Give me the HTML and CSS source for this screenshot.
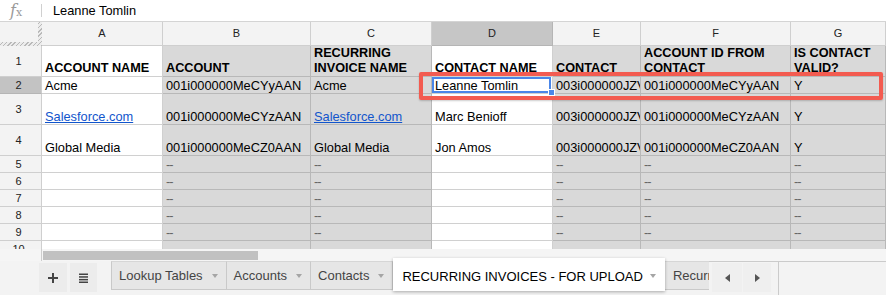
FILE: index.html
```html
<!DOCTYPE html>
<html>
<head>
<meta charset="utf-8">
<title>Sheet</title>
<link rel="stylesheet" href="styles.css">
</head>
<body>
<div class="formula-bar">
  <span class="fx"><i>f</i><span class="fx-x">x</span></span>
  <span class="fx-sep"></span>
  <span class="fx-value">Leanne Tomlin</span>
</div>
<div class="sheet">
  <div class="grid">
    <div class="corner"></div>
    <div class="ch">A</div><div class="ch">B</div><div class="ch">C</div><div class="ch on">D</div><div class="ch">E</div><div class="ch">F</div><div class="ch">G</div>

    <div class="rh">1</div>
    <div class="w hd">ACCOUNT NAME</div>
    <div class="g hd">ACCOUNT</div>
    <div class="g hd">RECURRING INVOICE NAME</div>
    <div class="w hd">CONTACT NAME</div>
    <div class="g hd">CONTACT</div>
    <div class="g hd">ACCOUNT ID FROM CONTACT</div>
    <div class="g hd">IS CONTACT VALID?</div>

    <div class="rh on">2</div>
    <div class="w">Acme</div>
    <div class="g">001i000000MeCYyAAN</div>
    <div class="g">Acme</div>
    <div class="w sel">Leanne Tomlin<span class="handle"></span></div>
    <div class="g">003i000000JZV</div>
    <div class="g">001i000000MeCYyAAN</div>
    <div class="g">Y</div>

    <div class="rh">3</div>
    <div class="w"><span class="link">Salesforce.com</span></div>
    <div class="g">001i000000MeCYzAAN</div>
    <div class="g"><span class="link">Salesforce.com</span></div>
    <div class="w">Marc Benioff</div>
    <div class="g">003i000000JZV</div>
    <div class="g">001i000000MeCYzAAN</div>
    <div class="g">Y</div>

    <div class="rh">4</div>
    <div class="w">Global Media</div>
    <div class="g">001i000000MeCZ0AAN</div>
    <div class="g">Global Media</div>
    <div class="w">Jon Amos</div>
    <div class="g">003i000000JZV</div>
    <div class="g">001i000000MeCZ0AAN</div>
    <div class="g">Y</div>

    <div class="rh">5</div>
    <div class="w"></div><div class="g dash">--</div><div class="g dash">--</div><div class="w"></div><div class="g dash">--</div><div class="g dash">--</div><div class="g dash">--</div>
    <div class="rh">6</div>
    <div class="w"></div><div class="g dash">--</div><div class="g dash">--</div><div class="w"></div><div class="g dash">--</div><div class="g dash">--</div><div class="g dash">--</div>
    <div class="rh">7</div>
    <div class="w"></div><div class="g dash">--</div><div class="g dash">--</div><div class="w"></div><div class="g dash">--</div><div class="g dash">--</div><div class="g dash">--</div>
    <div class="rh">8</div>
    <div class="w"></div><div class="g dash">--</div><div class="g dash">--</div><div class="w"></div><div class="g dash">--</div><div class="g dash">--</div><div class="g dash">--</div>
    <div class="rh">9</div>
    <div class="w"></div><div class="g dash">--</div><div class="g dash">--</div><div class="w"></div><div class="g dash">--</div><div class="g dash">--</div><div class="g dash">--</div>
    <div class="rh">10</div>
    <div class="w"></div><div class="g"></div><div class="g"></div><div class="w"></div><div class="g"></div><div class="g"></div><div class="g"></div>
  </div>
  <div class="highlight"></div>
</div>
<div class="hscroll">
  <div class="hscroll-gutter"></div>
  <div class="hscroll-track"><div class="thumb"></div></div>
</div>
<div class="tabbar">
  <div class="tb-btn plus">
    <svg width="10" height="10" viewBox="0 0 10 10"><rect x="4" y="0" width="2" height="10" fill="#444"/><rect x="0" y="4" width="10" height="2" fill="#444"/></svg>
  </div>
  <div class="tb-btn menu">
    <svg width="9" height="10" viewBox="0 0 9 10"><rect x="0" y="0.5" width="9" height="1.5" fill="#444"/><rect x="0" y="3.2" width="9" height="1.5" fill="#444"/><rect x="0" y="5.9" width="9" height="1.5" fill="#444"/><rect x="0" y="8.5" width="9" height="1.5" fill="#444"/></svg>
  </div>
  <div class="tabs">
    <div class="tab first">Lookup Tables<span class="caret"></span></div>
    <div class="tab">Accounts<span class="caret"></span></div>
    <div class="tab">Contacts<span class="caret"></span></div>
    <div class="tab active">RECURRING INVOICES - FOR UPLOAD<span class="caret"></span></div>
    <div class="tab cut">Recurr</div>
  </div>
  <div class="tab-nav">
    <div class="nav-btn"><span class="tri-left"></span></div>
    <div class="nav-btn"><span class="tri-right"></span></div>
  </div>
  <div class="tb-fill"></div>
</div>
</body>
</html>
```

FILE: styles.css
```css
* { box-sizing: border-box; margin: 0; padding: 0; }
body {
  margin: 0;
  width: 886px;
  height: 295px;
  overflow: hidden;
  background: #fff;
  font-family: "Liberation Sans", Arial, sans-serif;
  color: #000;
}

/* formula bar */
.formula-bar {
  height: 22px;
  border-bottom: 1px solid #d4d4d4;
  display: flex;
  align-items: center;
  padding-bottom: 1px;
}
.fx {
  width: 41px;
  padding-left: 10px;
  color: #9a9a9a;
  font-family: "DejaVu Serif", "Liberation Serif", serif;
  display: flex;
  align-items: baseline;
}
.fx i { font-size: 16px; font-style: italic; }
.fx-x { font-size: 11px; }
.fx-sep { width: 1px; height: 13px; background: #d0d0d0; }
.fx-value { margin-left: 11px; font-size: 12.8px; }

/* sheet */
.sheet {
  position: relative;
  height: 227px;
  overflow: hidden;
}
.grid {
  display: grid;
  grid-template-columns: 42px 121px 148px 121px 121px 88px 150px 95px;
  grid-template-rows: 24px 31px 17px 31px 31px repeat(6, 17px);
}
.grid > div {
  border-right: 1px solid #cdcdcd;
  border-bottom: 1px solid #cdcdcd;
  overflow: hidden;
  white-space: nowrap;
  font-size: 12.8px;
  line-height: 15px;
  padding: 0 3px;
  display: flex;
  align-items: flex-end;
}
.grid > .corner {
  padding: 0 4px 4px 0;
  border-right: none;
  border-bottom: none;
  background:
    linear-gradient(#f3f3f3, #f3f3f3) content-box,
    repeating-linear-gradient(-45deg, #b9b9b9 0 1px, #ececec 1px 3px);
}
.grid > .ch {
  background: #f3f3f3;
  border-color: #cfcfcf;
  justify-content: center;
  align-items: center;
  font-size: 11px;
  color: #222;
}
.grid > .ch.on { background: #c6c6c6; border-color: #b5b5b5; }
.grid > .rh {
  background: #f3f3f3;
  border-color: #cfcfcf;
  justify-content: center;
  align-items: center;
  padding: 0 4px 0 0;
  font-size: 11px;
  color: #222;
}
.grid > .rh.on { background: #c3c3c3; border-bottom-color: #b5b5b5; }
.grid > .w { background: #fff; border-color: #d0d0d0; }
.grid > .g { background: #d9d9d9; border-color: #b8b8b8; }
.grid > .hd { font-weight: bold; white-space: normal; font-size: 12.7px; }
.grid > .dash { color: #666; letter-spacing: -1px; }
.link { color: #1155cc; text-decoration: underline; }

.grid > .sel { position: relative; overflow: visible; z-index: 2; }
.sel::after {
  content: "";
  position: absolute;
  left: 0;
  top: 0;
  right: 1px;
  bottom: 0;
  border: 2px solid #4a86e8;
}
.handle {
  position: absolute;
  right: -3px;
  bottom: -3px;
  width: 7px;
  height: 7px;
  background: #4a86e8;
  border: 1px solid #fff;
  z-index: 3;
}

.highlight {
  position: absolute;
  left: 419px;
  top: 50px;
  width: 464px;
  height: 28px;
  border: 4px solid #f35b50;
  border-radius: 2px;
  box-shadow: 0 1px 2px rgba(0, 0, 0, 0.2);
  z-index: 4;
}

/* horizontal scroll */
.hscroll {
  height: 12px;
  display: flex;
  background: #f5f5f5;
}
.hscroll-gutter {
  width: 42px;
  border-right: 1px solid #cdcdcd;
}
.hscroll-track { flex: 1; padding: 2px 0 0 1px; }
.thumb { width: 215px; height: 9px; background: #c1c1c1; }

/* tab bar */
.tabbar {
  height: 34px;
  background: #f3f3f3;
  display: flex;
  align-items: flex-start;
  padding-left: 39px;
}
.tb-btn {
  margin-top: 2px;
  height: 29px;
  display: flex;
  align-items: center;
  justify-content: center;
  background: #ececec;
}
.tb-btn.plus { width: 28px; margin-right: 3px; }
.tb-btn.menu { width: 27px; margin-right: 14px; }
.tabs {
  display: flex;
  align-items: flex-start;
  width: 598px;
  height: 34px;
}
.tab {
  flex: none;
  height: 29px;
  display: flex;
  align-items: center;
  padding: 0 8px 0 7px;
  font-size: 13px;
  color: #444;
  background: #e6e6e6;
  border-right: 1px solid #c9c9c9;
  border-bottom: 1px solid #c9c9c9;
  border-top: 1px solid #d6d6d6;
  white-space: nowrap;
}
.tab.first { border-left: 1px solid #c9c9c9; }
.tab.active {
  background: #fff;
  color: #000;
  margin-top: -3px;
  height: 33px;
  padding: 3px 9px 0 9px;
  border: none;
  box-shadow: 0 1px 3px rgba(0, 0, 0, 0.3);
  position: relative;
  z-index: 1;
}
.tab.active .caret { margin-left: 7px; }
.tab.cut {
  flex: 1;
  min-width: 0;
  overflow: hidden;
  padding-left: 8px;
  border-right: none;
}
.caret {
  display: inline-block;
  width: 0;
  height: 0;
  border-left: 3px solid transparent;
  border-right: 3px solid transparent;
  border-top: 4px solid #a5a5a5;
  margin-left: 9px;
}
.tab-nav {
  width: 70px;
  height: 34px;
  border-top: 1px solid #cbcbcb;
  border-right: 1px solid #cbcbcb;
  display: flex;
  padding: 1px 0 0 3px;
  gap: 1px;
  background: #f3f3f3;
  position: relative;
  z-index: 2;
}
.nav-btn {
  width: 30px;
  height: 29px;
  display: flex;
  align-items: center;
  justify-content: center;
  background: #efefef;
}
.nav-btn + .nav-btn { width: 28px; }
.tri-left {
  width: 0; height: 0;
  border-top: 4.5px solid transparent;
  border-bottom: 4.5px solid transparent;
  border-right: 5px solid #555;
}
.tri-right {
  width: 0; height: 0;
  border-top: 4.5px solid transparent;
  border-bottom: 4.5px solid transparent;
  border-left: 5px solid #555;
}
.tb-fill {
  flex: 1;
  height: 34px;
  border-top: 1px solid #cbcbcb;
}
```
